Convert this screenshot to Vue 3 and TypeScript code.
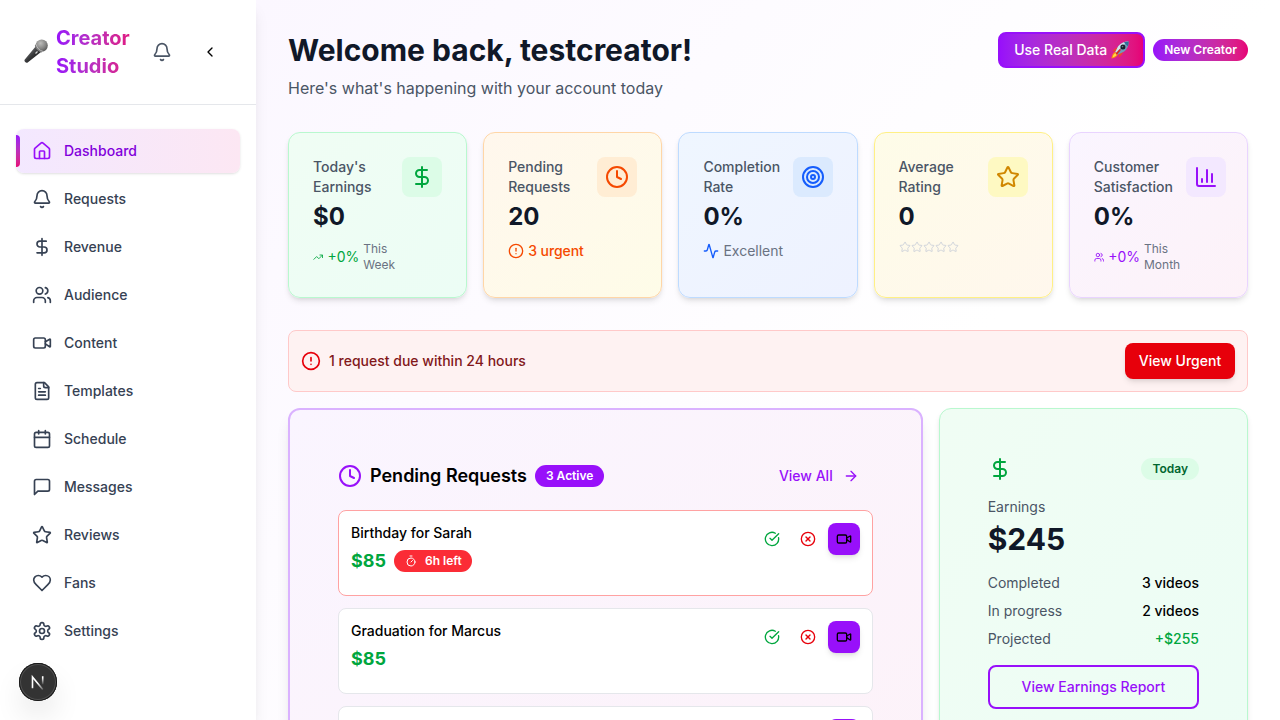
<script setup lang="ts">
import { h } from 'vue'

const icons = {
  home: '<path d="M15 21v-8a1 1 0 0 0-1-1h-4a1 1 0 0 0-1 1v8"/><path d="M3 10a2 2 0 0 1 .709-1.528l7-5.999a2 2 0 0 1 2.582 0l7 5.999A2 2 0 0 1 21 10v9a2 2 0 0 1-2 2H5a2 2 0 0 1-2-2z"/>',
  bell: '<path d="M10.268 21a2 2 0 0 0 3.464 0"/><path d="M3.262 15.326A1 1 0 0 0 4 17h16a1 1 0 0 0 .74-1.673C19.41 13.956 18 12.499 18 8A6 6 0 0 0 6 8c0 4.499-1.411 5.956-2.738 7.326"/>',
  dollar: '<line x1="12" x2="12" y1="2" y2="22"/><path d="M17 5H9.5a3.5 3.5 0 0 0 0 7h5a3.5 3.5 0 0 1 0 7H6"/>',
  users: '<path d="M16 21v-2a4 4 0 0 0-4-4H6a4 4 0 0 0-4 4v2"/><path d="M16 3.128a4 4 0 0 1 0 7.744"/><path d="M22 21v-2a4 4 0 0 0-3-3.87"/><circle cx="9" cy="7" r="4"/>',
  video: '<path d="m16 13 5.223 3.482a.5.5 0 0 0 .777-.416V7.87a.5.5 0 0 0-.752-.432L16 10.5"/><rect x="2" y="6" width="14" height="12" rx="2"/>',
  file: '<path d="M15 2H6a2 2 0 0 0-2 2v16a2 2 0 0 0 2 2h12a2 2 0 0 0 2-2V7Z"/><path d="M14 2v4a2 2 0 0 0 2 2h4"/><path d="M10 9H8"/><path d="M16 13H8"/><path d="M16 17H8"/>',
  calendar: '<path d="M8 2v4"/><path d="M16 2v4"/><rect width="18" height="18" x="3" y="4" rx="2"/><path d="M3 10h18"/>',
  message: '<path d="M21 15a2 2 0 0 1-2 2H7l-4 4V5a2 2 0 0 1 2-2h14a2 2 0 0 1 2 2z"/>',
  star: '<path d="M11.525 2.295a.53.53 0 0 1 .95 0l2.31 4.679a2.123 2.123 0 0 0 1.595 1.16l5.166.756a.53.53 0 0 1 .294.904l-3.736 3.638a2.123 2.123 0 0 0-.611 1.878l.882 5.14a.53.53 0 0 1-.771.56l-4.618-2.428a2.122 2.122 0 0 0-1.973 0L6.396 21.01a.53.53 0 0 1-.77-.56l.881-5.139a2.122 2.122 0 0 0-.611-1.879L2.16 9.795a.53.53 0 0 1 .294-.906l5.165-.755a2.122 2.122 0 0 0 1.597-1.16z"/>',
  heart: '<path d="M19 14c1.49-1.46 3-3.21 3-5.5A5.5 5.5 0 0 0 16.5 3c-1.76 0-3 .5-4.5 2-1.5-1.5-2.74-2-4.5-2A5.5 5.5 0 0 0 2 8.500c0 2.300 1.500 4.050 3 5.500l7 7Z"/>',
  settings: '<path d="M12.22 2h-.44a2 2 0 0 0-2 2v.18a2 2 0 0 1-1 1.730l-.43.25a2 2 0 0 1-2 0l-.15-.08a2 2 0 0 0-2.730.73l-.22.38a2 2 0 0 0 .73 2.730l.15.1a2 2 0 0 1 1 1.720v.51a2 2 0 0 1-1 1.740l-.15.09a2 2 0 0 0-.73 2.730l.22.38a2 2 0 0 0 2.730.73l.15-.08a2 2 0 0 1 2 0l.43.25a2 2 0 0 1 1 1.730V20a2 2 0 0 0 2 2h.44a2 2 0 0 0 2-2v-.18a2 2 0 0 1 1-1.730l.43-.25a2 2 0 0 1 2 0l.15.08a2 2 0 0 0 2.730-.73l.22-.39a2 2 0 0 0-.73-2.730l-.15-.08a2 2 0 0 1-1-1.740v-.5a2 2 0 0 1 1-1.740l.15-.09a2 2 0 0 0 .73-2.730l-.22-.38a2 2 0 0 0-2.730-.73l-.15.08a2 2 0 0 1-2 0l-.43-.25a2 2 0 0 1-1-1.730V4a2 2 0 0 0-2-2z"/><circle cx="12" cy="12" r="3"/>',
  chevron: '<path d="m15 18-6-6 6-6"/>',
  clock: '<circle cx="12" cy="12" r="10"/><path d="M12 6v6l4 2"/>',
  target: '<circle cx="12" cy="12" r="10"/><circle cx="12" cy="12" r="6"/><circle cx="12" cy="12" r="2"/>',
  chart: '<path d="M3 3v16a2 2 0 0 0 2 2h16"/><path d="M18 17V9"/><path d="M13 17V5"/><path d="M8 17v-3"/>',
  trend: '<path d="M16 7h6v6"/><path d="m22 7-8.5 8.5-5-5L2 17"/>',
  alert: '<circle cx="12" cy="12" r="10"/><line x1="12" x2="12" y1="8" y2="12"/><line x1="12" x2="12.01" y1="16" y2="16"/>',
  activity: '<path d="M22 12h-2.48a2 2 0 0 0-1.93 1.46l-2.35 8.36a.25.25 0 0 1-.48 0L9.24 2.18a.25.25 0 0 0-.48 0l-2.35 8.36A2 2 0 0 1 4.49 12H2"/>',
  arrow: '<path d="M5 12h14"/><path d="m12 5 7 7-7 7"/>',
  check: '<path d="M21.801 10A10 10 0 1 1 17 3.335"/><path d="m9 11 3 3L22 4"/>',
  cross: '<circle cx="12" cy="12" r="10"/><path d="m15 9-6 6"/><path d="m9 9 6 6"/>',
  timer: '<line x1="10" x2="14" y1="2" y2="2"/><line x1="12" x2="15" y1="14" y2="11"/><circle cx="12" cy="14" r="8"/>',
}
type IconName = keyof typeof icons

const Icon = (props: { name: IconName; size: number }) =>
  h('svg', {
    width: props.size,
    height: props.size,
    viewBox: '0 0 24 24',
    fill: 'none',
    stroke: 'currentColor',
    'stroke-width': 2,
    'stroke-linecap': 'round',
    'stroke-linejoin': 'round',
    innerHTML: icons[props.name],
  })
Icon.props = ['name', 'size']

const nav: { label: string; icon: IconName }[] = [
  { label: 'Dashboard', icon: 'home' },
  { label: 'Requests', icon: 'bell' },
  { label: 'Revenue', icon: 'dollar' },
  { label: 'Audience', icon: 'users' },
  { label: 'Content', icon: 'video' },
  { label: 'Templates', icon: 'file' },
  { label: 'Schedule', icon: 'calendar' },
  { label: 'Messages', icon: 'message' },
  { label: 'Reviews', icon: 'star' },
  { label: 'Fans', icon: 'heart' },
  { label: 'Settings', icon: 'settings' },
]

interface Stat {
  label: string
  value: string
  icon: IconName
  tone: string
  note?: string
  noteIcon?: IconName
  period?: string
  stars?: number
}
const stats: Stat[] = [
  { label: "Today's Earnings", value: '$0', icon: 'dollar', tone: 'green', note: '+0%', noteIcon: 'trend', period: 'This Week' },
  { label: 'Pending Requests', value: '20', icon: 'clock', tone: 'orange', note: '3 urgent', noteIcon: 'alert' },
  { label: 'Completion Rate', value: '0%', icon: 'target', tone: 'blue', note: 'Excellent', noteIcon: 'activity' },
  { label: 'Average Rating', value: '0', icon: 'star', tone: 'yellow', stars: 5 },
  { label: 'Customer Satisfaction', value: '0%', icon: 'chart', tone: 'purple', note: '+0%', noteIcon: 'users', period: 'This Month' },
]

const requests = [
  { id: 1, title: 'Birthday for Sarah', price: '$85', left: '6h left' },
  { id: 2, title: 'Graduation for Marcus', price: '$85', left: '' },
  { id: 3, title: '', price: '', left: '' },
]

const summary = [
  { label: 'Completed', value: '3 videos', gain: false },
  { label: 'In progress', value: '2 videos', gain: false },
  { label: 'Projected', value: '+$255', gain: true },
]
</script>

<template>
  <div class="app">
    <aside class="sidebar">
      <header class="brand">
        <svg class="mic" width="24" height="26" viewBox="0 0 24 26">
          <defs>
            <linearGradient id="micBody" x1="0" y1="0" x2="1" y2="1">
              <stop offset="0.2" stop-color="#77787a" />
              <stop offset="0.5" stop-color="#38393b" />
              <stop offset="0.9" stop-color="#111" />
            </linearGradient>
            <radialGradient id="micHead" cx="0.4" cy="0.3" r="0.75">
              <stop offset="0" stop-color="#bdbdbb" />
              <stop offset="0.6" stop-color="#858584" />
              <stop offset="1" stop-color="#525252" />
            </radialGradient>
          </defs>
          <path d="M11.6 8.6 17 14 4 24.2Q2.5 25.3 1.2 24T.8 21.4Z" fill="url(#micBody)" />
          <circle cx="17.7" cy="7.6" r="6.1" fill="url(#micHead)" />
          <path d="M12 6.2q1.3 5.6 7 7.2l-1.5 1.2q-5.3-1.7-6.7-6.9Z" fill="#777" />
          <path d="M12 6.2q1.3 5.6 7 7.2" fill="none" stroke="#c9c9c9" stroke-width="0.8" />
          <path d="M13.5 13.5l-2 2" stroke="#d5d5d5" stroke-width="1.3" />
        </svg>
        <span class="brand-name">Creator Studio</span>
        <button class="bell"><Icon name="bell" :size="20" /></button>
        <button class="collapse"><Icon name="chevron" :size="16" /></button>
      </header>
      <nav class="nav">
        <a v-for="(item, i) in nav" :key="item.label" class="nav-item" :class="{ active: i === 0 }">
          <Icon :name="item.icon" :size="20" /><span>{{ item.label }}</span>
        </a>
      </nav>
      <div class="dev-badge">
        <svg width="38" height="38" viewBox="0 0 38 38" fill="none">
          <defs>
            <linearGradient id="nDiag" x1="20" y1="19" x2="25" y2="26" gradientUnits="userSpaceOnUse">
              <stop stop-color="#fff" /><stop offset="1" stop-color="#fff" stop-opacity="0.2" />
            </linearGradient>
            <linearGradient id="nStem" x1="24" y1="13" x2="24" y2="22" gradientUnits="userSpaceOnUse">
              <stop offset="0.2" stop-color="#fff" /><stop offset="1" stop-color="#fff" stop-opacity="0" />
            </linearGradient>
          </defs>
          <path d="M13.5 25.200V14L23.800 26.500" stroke="url(#nDiag)" stroke-width="1.6" />
          <path d="M23.700 13.200V21.500" stroke="url(#nStem)" stroke-width="1.6" />
        </svg>
      </div>
    </aside>

    <main class="main">
      <header class="page-head">
        <div>
          <h1>Welcome back, testcreator!</h1>
          <p>Here's what's happening with your account today</p>
        </div>
        <div class="head-actions">
          <button class="real-data">
            <span>Use Real Data</span>
            <svg class="rocket" width="18" height="18" viewBox="0 0 18 18">
              <path d="M8 5.900Q4.200 6.300 1.300 10.600L5.300 10Z" fill="#f0412f" />
              <path d="M12.100 10.100Q12 13.600 7.700 16.800L8 12.600Z" fill="#f0412f" />
              <path d="M4.300 10.800Q1 12.600.4 17.600 5.200 16.800 7 13.500Z" fill="#ff8a16" />
              <path d="M4.600 11.800Q2.200 13.500 1.600 16.400 4.500 15.600 6 13.500Z" fill="#ffe14a" />
              <path d="M17.600.500Q11 .5 7.200 5.200L4.400 10.800 7.200 13.600 12.800 10.700Q17.900 7 17.600.5Z" fill="#6f9cba" />
              <path d="M17.600.500Q11 .5 7.200 5.200L4.400 10.800 5.700 12.100Q10 5 17.600.5Z" fill="#d3e3ec" />
              <path d="M17.600.500Q14.800.5 12.800 1.400L16.800 5.300Q17.700 3.200 17.600.5Z" fill="#2d7199" />
              <circle cx="11.900" cy="6" r="2.500" fill="#182029" />
              <circle cx="11.500" cy="5.600" r="0.800" fill="#5f7789" />
              <path d="M8.900 9 5.600 12.600" stroke="#d62c26" stroke-width="1.800" stroke-linecap="round" />
            </svg>
          </button>
          <span class="pill pill-new">New Creator</span>
        </div>
      </header>

      <section class="stats">
        <article v-for="s in stats" :key="s.label" class="stat" :class="s.tone">
          <div class="stat-text">
            <h2>{{ s.label }}</h2>
            <strong>{{ s.value }}</strong>
            <div v-if="s.stars" class="stars">
              <Icon v-for="n in s.stars" :key="n" name="star" :size="12" />
            </div>
            <div v-else class="note" :class="{ 'note-muted': s.tone === 'blue' }">
              <Icon :name="s.noteIcon!" :size="s.period ? 10.4 : 16" />
              <span>{{ s.note }}</span>
              <small v-if="s.period">{{ s.period }}</small>
            </div>
          </div>
          <div class="stat-icon"><Icon :name="s.icon" :size="24" /></div>
        </article>
      </section>

      <section class="alert">
        <Icon name="alert" :size="20" />
        <span>1 request due within 24 hours</span>
        <button>View Urgent</button>
      </section>

      <section class="panels">
        <article class="pending">
          <header>
            <Icon name="clock" :size="24" />
            <h2>Pending Requests</h2>
            <span class="pill pill-active">3 Active</span>
            <button class="view-all">View All <Icon name="arrow" :size="16" /></button>
          </header>
          <div class="requests">
            <div v-for="r in requests" :key="r.id" class="request" :class="{ urgent: r.left }">
              <div>
                <h3>{{ r.title }}</h3>
                <div class="price-row">
                  <strong>{{ r.price }}</strong>
                  <span v-if="r.left" class="pill pill-left"><Icon name="timer" :size="12" />{{ r.left }}</span>
                </div>
              </div>
              <div class="request-actions">
                <button class="accept"><Icon name="check" :size="16" /></button>
                <button class="decline"><Icon name="cross" :size="16" /></button>
                <button class="record"><Icon name="video" :size="16" /></button>
              </div>
            </div>
          </div>
        </article>

        <article class="earnings">
          <header>
            <Icon name="dollar" :size="24" />
            <span class="pill pill-today">Today</span>
          </header>
          <h2>Earnings</h2>
          <strong class="total">$245</strong>
          <dl>
            <div v-for="row in summary" :key="row.label">
              <dt>{{ row.label }}</dt>
              <dd :class="{ gain: row.gain }">{{ row.value }}</dd>
            </div>
          </dl>
          <button class="report">View Earnings Report</button>
        </article>
      </section>
    </main>
  </div>
</template>

<style>
html,
body {
  margin: 0;
  height: 100%;
  overflow: hidden;
}
</style>

<style scoped>
* {
  box-sizing: border-box;
}
.app {
  display: flex;
  width: 1280px;
  height: 720px;
  overflow: hidden;
  font-family: Inter, 'Liberation Sans', sans-serif;
  font-size: 14px;
  line-height: 20px;
  color: #000;
  background: linear-gradient(to bottom right, #faf5ff, #fff 50%, #fff) 0 0 / 1280px 1440px no-repeat;
}
h1, h2, h3, p, dl, dd {
  margin: 0;
}
button {
  display: flex;
  align-items: center;
  justify-content: center;
  padding: 0;
  border: 0;
  background: none;
  font: inherit;
  font-weight: 500;
  color: inherit;
  border-radius: 8px;
}
svg {
  flex: none;
  display: block;
}

.sidebar {
  position: relative;
  z-index: 1;
  width: 256px;
  height: 720px;
  flex: none;
  background: #fff;
  box-shadow: 0 10px 15px -3px rgb(0 0 0 / 0.1), 0 4px 6px -4px rgb(0 0 0 / 0.1);
}
.brand {
  display: flex;
  align-items: center;
  height: 105px;
  padding: 0 24px;
  border-bottom: 1px solid #e5e7eb;
}
.mic {
  margin-top: -2px;
}
.brand-name {
  width: 80px;
  margin-left: 8px;
  font-size: 20px;
  line-height: 28px;
  font-weight: 700;
  color: transparent;
  background: linear-gradient(to right in oklab, #9810fa, #e60076);
  background-clip: text;
}
.bell {
  width: 36px;
  height: 36px;
  margin-left: 8px;
  color: #4a5565;
}
.collapse {
  width: 44px;
  height: 44px;
  margin-left: 8px;
}
.nav {
  display: flex;
  flex-direction: column;
  gap: 4px;
  padding: 24px 16px;
}
.nav-item {
  position: relative;
  display: flex;
  align-items: center;
  gap: 12px;
  height: 44px;
  padding: 0 16px;
  border-radius: 8px;
  font-weight: 500;
  color: #364153;
}
.nav-item.active {
  color: #8200db;
  background: linear-gradient(to right in oklab, #f3e8ff, #fce7f3);
  box-shadow: 0 1px 3px rgb(0 0 0 / 0.1), 0 1px 2px -1px rgb(0 0 0 / 0.1);
}
.nav-item.active svg {
  color: #9810fa;
}
.nav-item.active::before {
  content: '';
  position: absolute;
  left: 0;
  top: 6px;
  width: 4px;
  height: 32px;
  border-radius: 0 4px 4px 0;
  background: linear-gradient(to bottom in oklab, #9810fa, #e60076);
}
.dev-badge {
  position: absolute;
  left: 19px;
  top: 663px;
  width: 38px;
  height: 38px;
  border-radius: 50%;
  background: #333;
  box-shadow: inset 0 0 0 1px #171717, inset 0 0 0 2px #505050, 0 16px 32px -8px rgb(0 0 0 / 0.24);
}

.main {
  flex: 1;
  padding: 32px;
}
.page-head {
  display: flex;
  justify-content: space-between;
  align-items: flex-start;
  height: 68px;
}
h1 {
  font-size: 30px;
  line-height: 36px;
  font-weight: 700;
  color: #101828;
}
.page-head p {
  margin-top: 8px;
  font-size: 16px;
  line-height: 24px;
  color: #4a5565;
}
.head-actions {
  display: flex;
  align-items: center;
  gap: 8px;
}
.real-data {
  gap: 4px;
  width: 147px;
  height: 36px;
  border: 2px solid #9810fa;
  color: #fff;
  background: linear-gradient(to right in oklab, #9810fa, #e60076);
}
.pill {
  display: inline-flex;
  align-items: center;
  justify-content: center;
  height: 22px;
  padding: 0 11px;
  border-radius: 11px;
  font-size: 12px;
  line-height: 16px;
  font-weight: 600;
  color: #fff;
}
.pill-new {
  background: linear-gradient(to right in oklab, #9810fa, #e60076);
}
.pill-active {
  background: #9810fa;
}
.pill-today {
  color: #016630;
  background: #dcfce7;
}
.price-row .pill-left {
  gap: 8px;
  padding-right: 10px;
  background: #fb2c36;
}

.stats {
  display: grid;
  grid-template-columns: repeat(5, 1fr);
  gap: 16px;
  margin-top: 32px;
}
.stat {
  display: flex;
  justify-content: space-between;
  height: 166px;
  padding: 24px;
  border: 1px solid;
  border-radius: 12px;
  box-shadow: 0 4px 6px -1px rgb(0 0 0 / 0.1), 0 2px 4px -2px rgb(0 0 0 / 0.1);
}
.stat-text {
  width: 88px;
  flex: none;
}
.stat h2 {
  width: 80px;
  font-size: 14px;
  line-height: 20px;
  font-weight: 500;
  color: #4a5565;
}
.stat strong {
  display: block;
  margin-top: 4px;
  font-size: 24px;
  line-height: 32px;
  font-weight: 700;
  color: #101828;
}
.stat-icon {
  display: grid;
  place-items: center;
  width: 40px;
  height: 40px;
  flex: none;
  border-radius: 8px;
}
.note,
.stars {
  display: flex;
  align-items: center;
  margin-top: 8px;
}
.note {
  gap: 4px;
  white-space: nowrap;
}
.note small {
  width: 40px;
  font-size: 12px;
  line-height: 16px;
  color: #6a7282;
  white-space: normal;
}
.note-muted span {
  color: #6a7282;
}
.stars {
  color: #d1d5dc;
}
.green { border-color: #b9f8cf; background: linear-gradient(to bottom right, #f0fdf4, #ecfdf5); }
.green .stat-icon { color: #00a63e; background: #dcfce7; }
.green .note { color: #00a63e; }
.orange { border-color: #ffd6a7; background: linear-gradient(to bottom right, #fff7ed, #fefce8); }
.orange .stat-icon { color: #f54900; background: #ffedd4; }
.orange .note { color: #f54900; font-weight: 500; }
.orange .note span { letter-spacing: -0.08px; }
.blue { border-color: #bedbff; background: linear-gradient(to bottom right, #eff6ff, #eef2ff); }
.blue .stat-icon { color: #155dfc; background: #dbeafe; }
.blue .note { color: #155dfc; }
.yellow { border-color: #fff085; background: linear-gradient(to bottom right, #fefce8, #fff7ed); }
.yellow .stat-icon { color: #d08700; background: #fef9c2; }
.purple { border-color: #e9d4ff; background: linear-gradient(to bottom right, #faf5ff, #fdf2f8); }
.purple .stat-icon { margin-right: -3px; color: #9810fa; background: #f3e8ff; }
.purple .note { color: #9810fa; }

.alert {
  display: flex;
  align-items: center;
  gap: 8px;
  height: 62px;
  margin-top: 32px;
  padding: 0 12px;
  border: 1px solid #ffc9c9;
  border-radius: 8px;
  background: #fef2f2;
  font-weight: 500;
  color: #82181a;
}
.alert svg {
  color: #e7000b;
}
.alert button {
  width: 110px;
  height: 36px;
  margin-left: auto;
  color: #fff;
  background: #e7000b;
  box-shadow: 0 4px 6px -1px rgb(0 0 0 / 0.1), 0 2px 4px -2px rgb(0 0 0 / 0.1);
}

.panels {
  display: grid;
  grid-template-columns: 634.67px 309.33px;
  gap: 16px;
  margin-top: 16px;
}
.pending {
  height: 500px;
  padding: 48px;
  border: 2px solid #dab2ff;
  border-radius: 12px;
  background: linear-gradient(to bottom right, #faf5ff, #fdf2f8);
  box-shadow: 0 10px 15px -3px rgb(0 0 0 / 0.1), 0 4px 6px -4px rgb(0 0 0 / 0.1);
}
.pending header {
  display: flex;
  align-items: center;
  gap: 8px;
  height: 36px;
}
.pending header > svg {
  color: #9810fa;
}
.pending h2 {
  font-size: 18px;
  line-height: 28px;
  font-weight: 600;
}
.view-all {
  gap: 10px;
  height: 36px;
  margin-left: auto;
  padding: 0 14px;
  color: #9810fa;
}
.requests {
  display: flex;
  flex-direction: column;
  gap: 12px;
  margin-top: 16px;
}
.request {
  display: flex;
  justify-content: space-between;
  height: 86px;
  padding: 12px;
  border: 1px solid #e5e7eb;
  border-radius: 8px;
  background: #fff;
}
.request.urgent {
  border-color: #ffa2a2;
}
.request h3 {
  font-size: 14px;
  line-height: 20px;
  font-weight: 500;
}
.price-row {
  display: flex;
  align-items: center;
  gap: 8px;
  margin-top: 4px;
}
.price-row strong {
  font-size: 18px;
  line-height: 28px;
  font-weight: 700;
  color: #00a63e;
}
.request-actions {
  display: flex;
  gap: 4px;
}
.request-actions button {
  width: 32px;
  height: 32px;
}
.accept {
  color: #00a63e;
}
.decline {
  color: #e7000b;
}
.request-actions .record {
  background: #9810fa;
  box-shadow: 0 4px 6px -1px rgb(0 0 0 / 0.1), 0 2px 4px -2px rgb(0 0 0 / 0.1);
}

.earnings {
  height: 500px;
  padding: 48px;
  border: 1px solid #b9f8cf;
  border-radius: 12px;
  background: linear-gradient(to bottom right, #f0fdf4, #ecfdf5);
  box-shadow: 0 4px 6px -1px rgb(0 0 0 / 0.1), 0 2px 4px -2px rgb(0 0 0 / 0.1);
}
.earnings header {
  display: flex;
  align-items: center;
  justify-content: space-between;
  height: 24px;
  color: #00a63e;
}
.earnings h2 {
  margin-top: 16px;
  font-size: 14px;
  line-height: 20px;
  font-weight: 400;
  color: #4a5565;
}
.total {
  display: block;
  margin-top: 4px;
  font-size: 30px;
  line-height: 36px;
  font-weight: 700;
  color: #101828;
}
dl {
  display: flex;
  flex-direction: column;
  gap: 8px;
  margin-top: 16px;
}
dl div {
  display: flex;
  justify-content: space-between;
}
dt {
  color: #4a5565;
}
dd {
  font-weight: 500;
}
dd.gain {
  color: #00a63e;
}
.report {
  width: 100%;
  height: 44px;
  margin-top: 16px;
  border: 2px solid #9810fa;
  color: #9810fa;
}
</style>
